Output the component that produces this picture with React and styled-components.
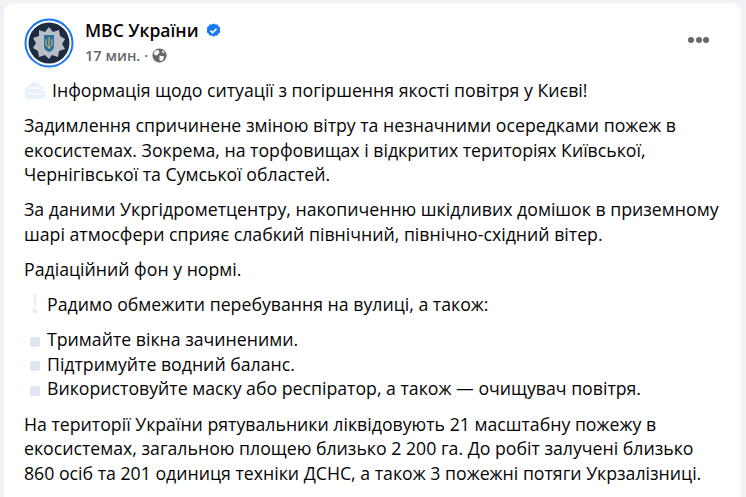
import React from "react";
import styled, { createGlobalStyle } from "styled-components";

const Global = createGlobalStyle`
  html, body { margin: 0; padding: 0; height: 100%; background: #f0f2f5; overflow: hidden; }
`;
const Page = styled.div`
  width: 746px; height: 497px; box-sizing: border-box; padding: 3px 5px 0 4px; overflow: hidden;
`;
const Card = styled.article`
  background: #fff; border-radius: 10px 10px 0 0; height: 494px; box-sizing: border-box;
  padding: 15px 20px 0 20px;
  font-family: "Open Sans", "Noto Sans", sans-serif; color: #050505;
`;
const Header = styled.header`
  display: flex; align-items: flex-start; gap: 11px; height: 50px; margin-bottom: 10px;
`;
const Avatar = styled.svg` width: 50px; height: 50px; flex: none; `;
const Meta = styled.div` flex: 1; display: flex; flex-direction: column; `;
const NameRow = styled.div` display: flex; align-items: center; gap: 7px; height: 24px; `;
const Name = styled.span` font-size: 17.5px; font-weight: 600; `;
const TimeRow = styled.div`
  display: flex; align-items: center; gap: 4px; height: 20px; margin-top: 3px;
  font-size: 14.6px; font-weight: 600; color: #65676b;
`;
const More = styled.button`
  border: 0; background: none; padding: 0; margin: 19px 12px 0 0; display: flex; gap: 1.5px;
`;
const Dot = styled.i` width: 6px; height: 6px; border-radius: 50%; background: #65676b; display: block; `;
const Para = styled.p`
  margin: 0 0 10.5px; font-size: 17.72px; line-height: 24.6px; white-space: nowrap;
`;
const Line = styled.div` display: flex; align-items: center; gap: ${p => p.$gap ?? 1}px; `;
const Emoji = styled.svg` width: 22px; height: 20px; flex: none; `;

const Cloud = () => (
  <Emoji viewBox="0 0 22 20">
    <path d="M1 16 V9 L10 1 L20 7 L18 9 L21 11 V16 Q21 19 18 19 H4 Q1 19 1 16Z" fill="#e6f1fa" />
    <path d="M4 8 H16 M3 14 H19" stroke="#f8fbfe" strokeWidth="2" />
  </Emoji>
);
const Bang = () => (
  <Emoji viewBox="0 0 22 20">
    <path d="M9 0 H13 L12 13 H10Z" fill="#eef0f8" />
    <circle cx="11" cy="17" r="2.4" fill="#e6ebf6" />
  </Emoji>
);
const Bullet = () => (
  <Emoji viewBox="0 0 22 20">
    <rect x="6" y="7" width="10" height="10" rx="2" fill="#dfe6f5" />
  </Emoji>
);

export default function App() {
  return (
    <Page>
      <Global />
      <Card>
        <Header>
          <Avatar viewBox="0 0 50 50">
            <circle cx="25" cy="25" r="23.5" fill="#fff" stroke="#1877f2" strokeWidth="2" />
            <circle cx="25" cy="25" r="20.5" fill="#1d2c40" />
            <path d="M25 9 L29 14 L35 12 L36 18 L41 21 L38 26 L41 31 L35 33 L34 39 L28 37 L25 41 L21 37 L15 39 L14 33 L9 30 L12 25 L9 20 L15 18 L15 12 L21 14Z" fill="#b9bec6" />
            <path d="M20 17 H30 V28 Q30 32 25 34 Q20 32 20 28Z" fill="#2b6d9c" />
            <path d="M25 19 V31 M22 21 V27 L25 30 L28 27 V21" stroke="#d8c060" strokeWidth="1" fill="none" />
          </Avatar>
          <Meta>
            <NameRow>
              <Name>МВС України</Name>
              <svg width="15" height="15" viewBox="0 0 16 16">
                <path d="M8 .4l2 1.3 2.4-.1.9 2.2 2 1.3-.6 2.4.6 2.4-2 1.3-.9 2.2-2.4-.1-2 1.3-2-1.3-2.4.1-.9-2.2-2-1.3.6-2.4-.6-2.4 2-1.3.9-2.2 2.4.1z" fill="#1877f2" />
                <path d="M4.8 8.2l2.2 2.2 4.2-4.4" stroke="#fff" strokeWidth="1.7" fill="none" />
              </svg>
            </NameRow>
            <TimeRow>
              <span>17 мин. ·</span>
              <svg width="15" height="15" viewBox="0 0 16 16">
                <circle cx="8" cy="8" r="7.5" fill="#65676b" />
                <path d="M3 3 L7 2 L8 5 L5 8 L2 7Z M8 8 L13 9 L11 14 L8 13Z M11 2 L14 5 L11 5Z" fill="#fff" />
              </svg>
            </TimeRow>
          </Meta>
          <More aria-label="Меню"><Dot /><Dot /><Dot /></More>
        </Header>
        <Para><Line $gap={6}><Cloud />Інформація щодо ситуації з погіршення якості повітря у Києві!</Line></Para>
        <Para>Задимлення спричинене зміною вітру та незначними осередками пожеж в<br />екосистемах. Зокрема, на торфовищах і відкритих територіях Київської,<br />Чернігівської та Сумської областей.</Para>
        <Para>За даними Укргідрометцентру, накопиченню шкідливих домішок в приземному<br />шарі атмосфери сприяє слабкий північний, північно-східний вітер.</Para>
        <Para>Радіаційний фон у нормі.</Para>
        <Para><Line><Bang />Радимо обмежити перебування на вулиці, а також:</Line></Para>
        <Para>
          <Line><Bullet />Тримайте вікна зачиненими.</Line>
          <Line><Bullet />Підтримуйте водний баланс.</Line>
          <Line><Bullet />Використовуйте маску або респіратор, а також — очищувач повітря.</Line>
        </Para>
        <Para>На території України рятувальники ліквідовують 21 масштабну пожежу в<br />екосистемах, загальною площею близько 2 200 га. До робіт залучені близько<br />860 осіб та 201 одиниця техніки ДСНС, а також 3 пожежні потяги Укрзалізниці.</Para>
      </Card>
    </Page>
  );
}
